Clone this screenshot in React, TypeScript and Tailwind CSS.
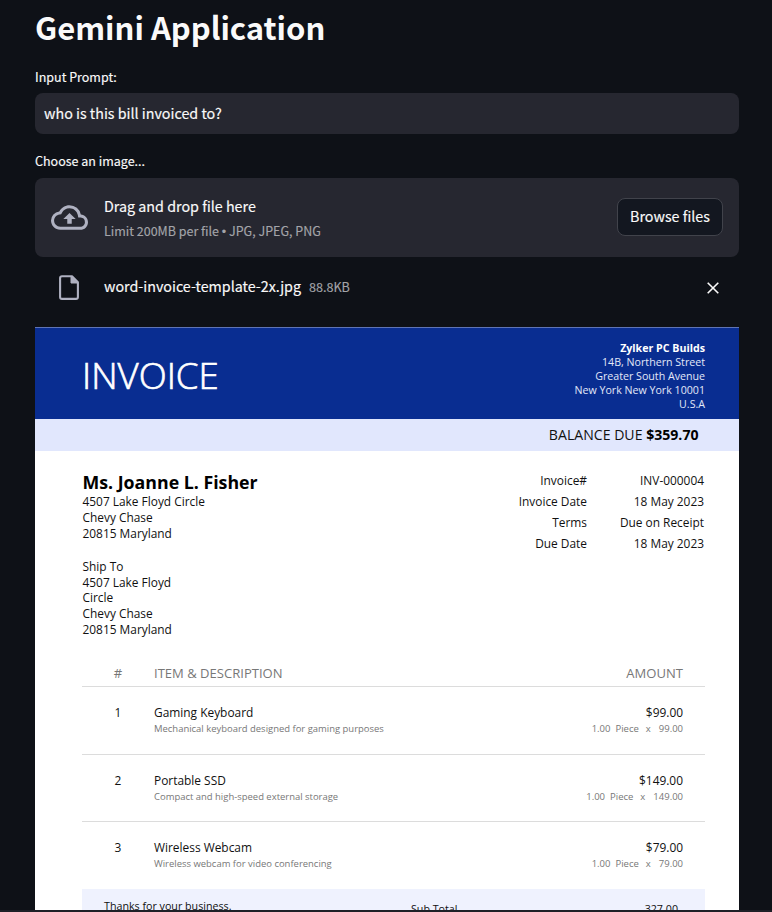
import React from "react";

type Item = { no: number; name: string; desc: string; amount: string; rate: string };

const items: Item[] = [
  { no: 1, name: "Gaming Keyboard", desc: "Mechanical keyboard designed for gaming purposes", amount: "$99.00", rate: "99.00" },
  { no: 2, name: "Portable SSD", desc: "Compact and high-speed external storage", amount: "$149.00", rate: "149.00" },
  { no: 3, name: "Wireless Webcam", desc: "Wireless webcam for video conferencing", amount: "$79.00", rate: "79.00" },
];

const meta = [
  ["Invoice#", "INV-000004"],
  ["Invoice Date", "18 May 2023"],
  ["Terms", "Due on Receipt"],
  ["Due Date", "18 May 2023"],
];

function CloudUpload() {
  return (
    <svg viewBox="0 0 24 24" className="h-[37px] w-[37px] shrink-0 fill-[#afb1c1]">
      <path d="M19.35 10.04A7.49 7.49 0 0 0 12 4C9.11 4 6.6 5.64 5.35 8.04A5.994 5.994 0 0 0 0 14c0 3.31 2.69 6 6 6h13c2.76 0 5-2.24 5-5 0-2.64-2.05-4.78-4.65-4.96zM19 18H6c-2.21 0-4-1.79-4-4 0-2.05 1.53-3.76 3.56-3.97l1.07-.11.5-.95A5.469 5.469 0 0 1 12 6c2.62 0 4.88 1.86 5.39 4.43l.3 1.5 1.53.11A2.98 2.98 0 0 1 22 15c0 1.65-1.35 3-3 3zM8 13h2.55v3h2.9v-3H16l-4-4z" />
    </svg>
  );
}

function FileIcon() {
  return (
    <svg viewBox="0 0 20 25" className="h-[25px] w-5 shrink-0" fill="none" stroke="#afb1c1" strokeWidth="2.1">
      <path d="M3 1.2h10l5.9 6V22a1.9 1.9 0 0 1-1.9 1.9H3A1.9 1.9 0 0 1 1.1 22V3A1.9 1.9 0 0 1 3 1.2z" strokeLinejoin="round" />
      <path d="M12 1.2V8h6.9z" fill="#afb1c1" strokeWidth="1" />
    </svg>
  );
}

function Invoice() {
  return (
    <div className="h-[583px] overflow-hidden whitespace-nowrap border-t border-[#5f74b5] bg-white font-['Open_Sans',sans-serif] text-[#111]">
      <div className="flex h-[91px] justify-between bg-[#092d91] pl-[47px] pr-[34px] text-white">
        <div className="pt-[22px] text-[36.6px] font-light leading-[51px] [-webkit-text-stroke:0.7px_white]">INVOICE</div>
        <div className="pt-[13px] text-right text-[10.65px] leading-[14px] text-[#e3e8f8]">
          <div className="font-bold text-white">Zylker PC Builds</div>
          <div>14B, Northern Street</div>
          <div>Greater South Avenue</div>
          <div>New York New York 10001</div>
          <div>U.S.A</div>
        </div>
      </div>
      <div className="h-8 bg-[#e1e7fd] pr-[40.5px] text-right text-[14.1px] leading-8">
        BALANCE DUE <span className="font-bold text-black">$359.70</span>
      </div>

      <div className="flex h-[210px] justify-between pl-[47.5px] pr-[35px] text-[11.9px]">
        <div className="pt-[19.4px] leading-[15.7px]">
          <div className="text-[17.75px] font-bold leading-[24px] text-black">Ms. Joanne L. Fisher</div>
          <div>4507 Lake Floyd Circle</div>
          <div>Chevy Chase</div>
          <div>20815 Maryland</div>
          <div className="mt-[17.4px]">Ship To</div>
          <div>4507 Lake Floyd</div>
          <div>Circle</div>
          <div>Chevy Chase</div>
          <div>20815 Maryland</div>
        </div>
        <div className="pt-[19px] text-right leading-[20.9px]">
          {meta.map(([k, v]) => (
            <div key={k} className="flex justify-end">
              <span>{k}</span>
              <span className="w-[117px]">{v}</span>
            </div>
          ))}
        </div>
      </div>

      <div className="ml-[47px] mr-[34px]">
        <div className="flex h-[26px] border-b border-[#dcdcdc] pr-[22px] text-[13.05px] leading-[24px] text-[#777]">
          <span className="w-[72px] text-center">#</span>
          <span className="flex-1">ITEM &amp; DESCRIPTION</span>
          <span>AMOUNT</span>
        </div>
        {items.map((it) => (
          <div
            key={it.no}
            className="flex h-[67.5px] border-b border-[#dcdcdc] pr-[22px] pt-[17.4px] text-[11.92px] leading-[17px] last-of-type:border-b-0"
          >
            <span className="w-[72px] text-center">{it.no}</span>
            <div className="flex-1">
              <div>{it.name}</div>
              <div className="text-[9.46px] leading-[15px] text-[#777]">{it.desc}</div>
            </div>
            <div className="text-right">
              <div>{it.amount}</div>
              <div className="flex justify-end text-[9.5px] leading-[15px] text-[#777]">
                <span>1.00</span>
                <span className="ml-[5px]">Piece</span>
                <span className="ml-[7px]">x</span>
                <span className="ml-[8px]">{it.rate}</span>
              </div>
            </div>
          </div>
        ))}
        <section className="-mt-[0.5px] flex h-10 bg-[#eff2fe] pl-[22px] pr-[27px] text-[10.7px]">
          <span className="w-[307px] pt-[9px] leading-[16px]">Thanks for your business.</span>
          <span className="flex-1 pt-[12px] leading-[16px]">Sub Total</span>
          <span className="pt-[12px] leading-[16px]">327.00</span>
        </section>
      </div>
    </div>
  );
}

export default function App() {
  return (
    <div className="h-[912px] overflow-hidden bg-[#0e1117] font-['Noto_Sans_CJK_SC',sans-serif] text-[14.31px] text-[#fafafa]">
      <main className="ml-[35px] w-[704px] whitespace-nowrap">
        <h1 className="h-[51px] text-[31px] font-bold leading-[53px]">Gemini Application</h1>
        <div className="[-webkit-text-stroke:0.15px]">
          <div className="mt-[15px] h-[21px] text-[12.5px] leading-[21.9px]">Input Prompt:</div>
          <div className="mt-1.5 h-[41px] rounded-lg bg-[#262730] px-[9px] leading-[40px]">who is this bill invoiced to?</div>
          <div className="mt-4 h-[21px] text-[12.5px] leading-[21.9px]">Choose an image...</div>
          <div className="mt-[7px] flex h-[79px] items-center rounded-lg bg-[#262730] px-4">
            <CloudUpload />
            <div className="ml-4 flex-1 pt-[3px]">
              <div className="leading-[24px]">Drag and drop file here</div>
              <div className="text-[12.5px] leading-[26px] text-[#a3a4a9]">
                Limit 200MB per file <span className="font-['Liberation_Sans']">•</span> JPG, JPEG, PNG
              </div>
            </div>
            <button className="mb-px h-[38px] w-[106px] rounded-lg border border-[#41434b] bg-[#131720] text-center leading-[34px]">
              <span className="block h-[36px]">Browse files</span>
            </button>
          </div>
          <div className="flex h-[70px] items-start pl-6 pr-5 pt-[18px]">
            <FileIcon />
            <span className="ml-[25px] leading-[22px]">word-invoice-template-2x.jpg</span>
            <span className="ml-2 flex-1 text-[12.6px] leading-[24px] text-[#a3a4a9]">88.8KB</span>
            <svg viewBox="0 0 12 12" className="mt-[7px] h-3 w-3" fill="none" stroke="#fafafa" strokeWidth="1.6">
              <path d="M.7.7l10.6 10.6M11.3.7L.7 11.3" />
            </svg>
          </div>
        </div>
        <Invoice />
      </main>
      <div className="h-0.5 bg-[#1e1f26]" />
    </div>
  );
}
